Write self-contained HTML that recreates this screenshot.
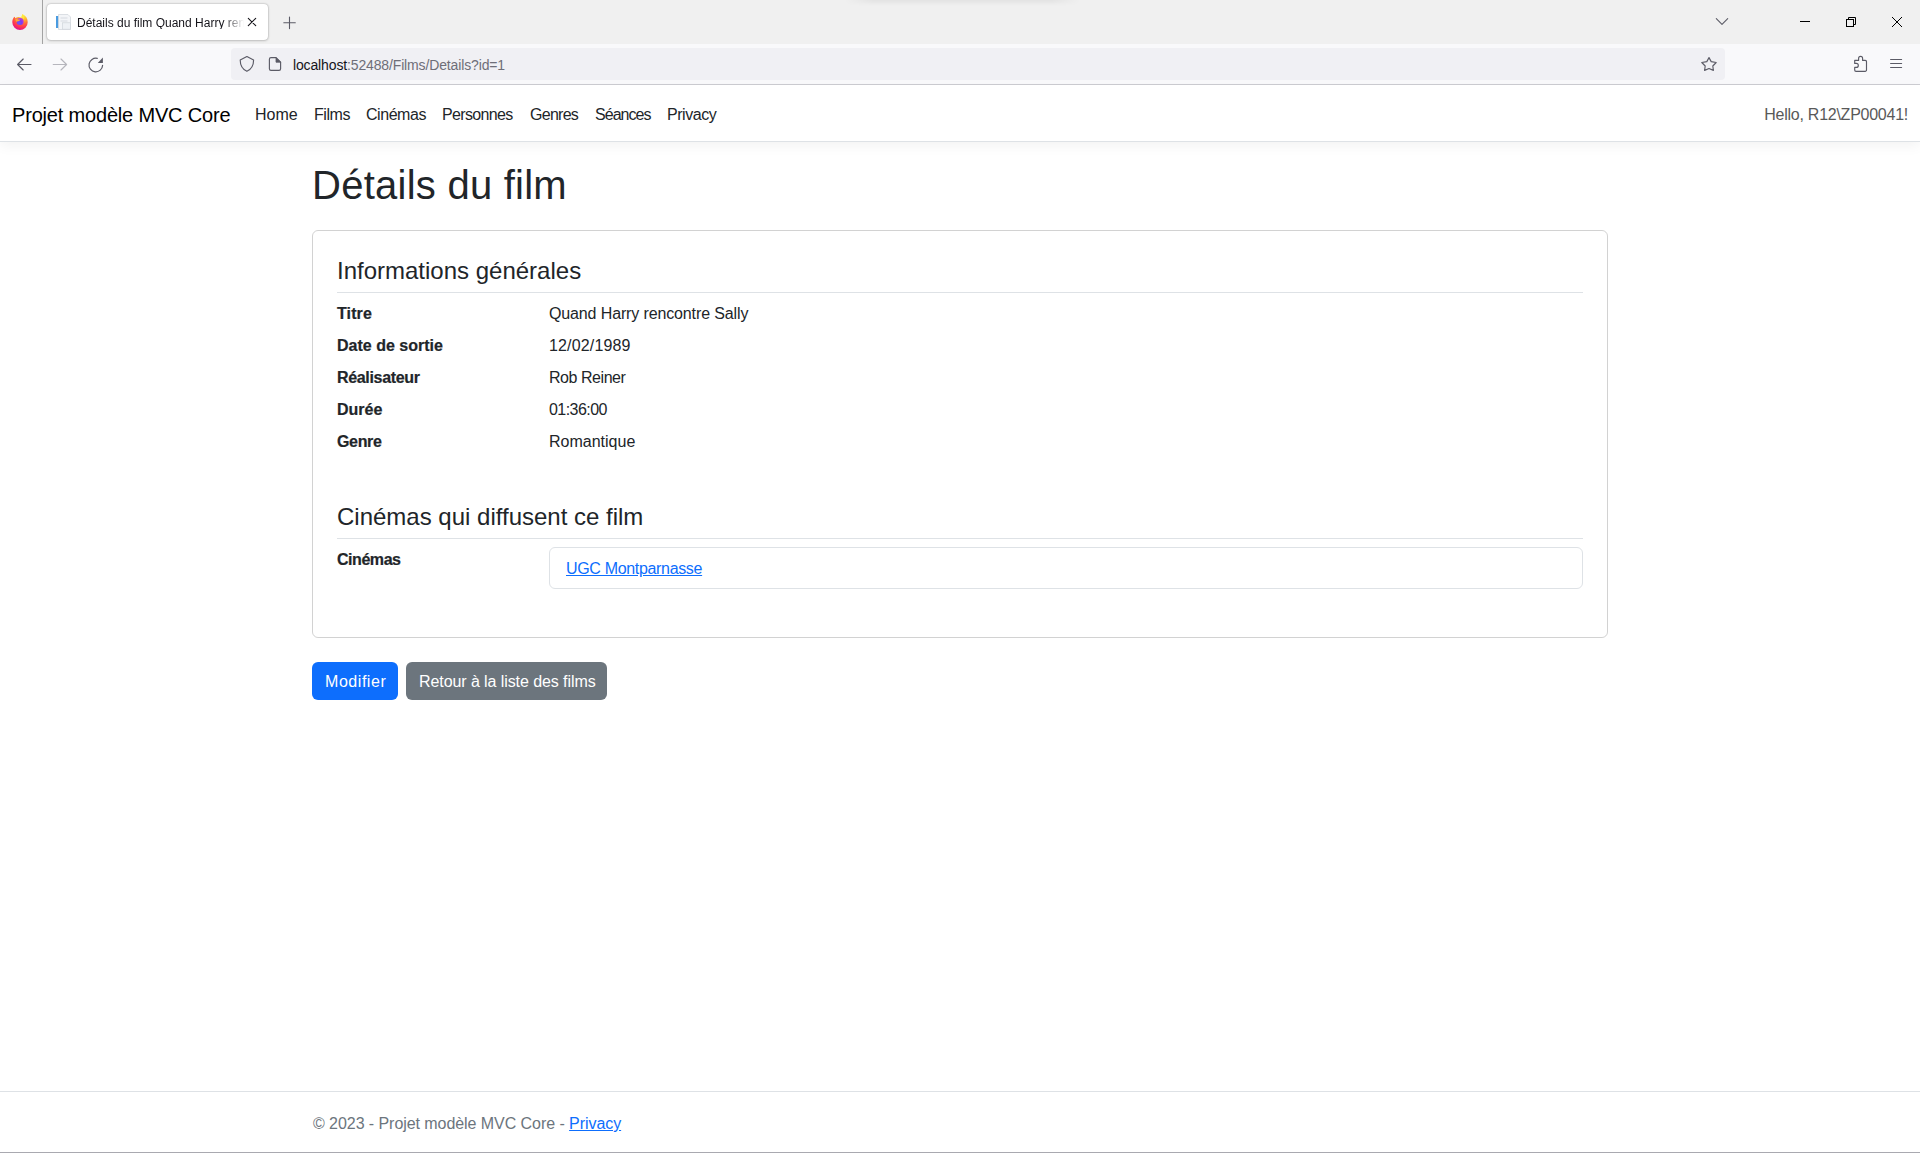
<!DOCTYPE html>
<html>
<head>
<meta charset="utf-8">
<style>
*{box-sizing:border-box;margin:0;padding:0}
html,body{width:1920px;height:1153px;overflow:hidden;background:#fff;font-family:"Liberation Sans",sans-serif;color:#212529}
.a{position:absolute;white-space:nowrap}
#tabbar{position:absolute;left:0;top:0;width:1920px;height:44px;background:#f0f0f0}
#toolbar{position:absolute;left:0;top:44px;width:1920px;height:40px;background:#f9f9fb}
#chromeline{position:absolute;left:0;top:84px;width:1920px;height:1px;background:#cdcdd2}
#tab{position:absolute;left:47px;top:4px;width:221px;height:36px;background:#fff;border-radius:4px;box-shadow:0 0 2px rgba(0,0,0,.35),0 1px 3px rgba(0,0,0,.12)}
#sep{position:absolute;left:42px;top:0;width:1px;height:44px;background:#a3a3a3}
#urlbar{position:absolute;left:231px;top:48px;width:1494px;height:32px;background:#f0f0f4;border-radius:4px}
.t12{font-size:12px;line-height:12px}
.t14{font-size:14px;line-height:14px}
.t16{font-size:16px;line-height:16px}
.t20{font-size:20px;line-height:20px}
.t24{font-size:24px;line-height:24px}
.t40{font-size:40px;line-height:40px}
#navbar{position:absolute;left:0;top:85px;width:1920px;height:57px;background:#fff;border-bottom:1px solid #dee2e6;box-shadow:0 .25rem .75rem rgba(0,0,0,.05)}
#card{position:absolute;left:312px;top:230px;width:1296px;height:408px;border:1px solid rgba(0,0,0,.175);border-radius:6px}
.hr{position:absolute;left:337px;width:1246px;height:1px;background:#dee2e6}
.b{font-weight:bold;-webkit-text-stroke:0.2px #212529}
#lg{position:absolute;left:549px;top:547px;width:1034px;height:42px;border:1px solid #dee2e6;border-radius:6px}
.btn{position:absolute;top:662px;height:38px;border-radius:6px}
#footer{position:absolute;left:0;top:1091px;width:1920px;height:1px;background:#dee2e6}
#winb{position:absolute;left:0;top:1152px;width:1920px;height:1px;background:#a9a9b0}
a{color:#0d6efd;text-decoration:underline}
</style>
</head>
<body>
<!-- Browser chrome -->
<div id="tabbar"></div>
<div class="a" style="left:845px;top:0;width:235px;height:6px;background:linear-gradient(to bottom,rgba(0,0,0,.05),rgba(0,0,0,0));-webkit-mask-image:linear-gradient(to right,transparent,#000 12%,#000 88%,transparent)"></div>
<div id="toolbar"></div>
<div id="chromeline"></div>
<div id="sep"></div>
<div id="tab"></div>
<div id="urlbar"></div>
<svg class="a" style="left:0;top:0" width="1920" height="85" viewBox="0 0 1920 85">
<defs>
<radialGradient id="ff1" cx="23" cy="15" r="15" gradientUnits="userSpaceOnUse"><stop offset="0" stop-color="#fff44f"/><stop offset="0.3" stop-color="#ffbd2e"/><stop offset="0.55" stop-color="#ff7139"/><stop offset="0.8" stop-color="#ff3750"/><stop offset="1" stop-color="#e31587"/></radialGradient>
<radialGradient id="ff2" cx="19" cy="23" r="4.5" gradientUnits="userSpaceOnUse"><stop offset="0" stop-color="#6a5cff"/><stop offset="0.6" stop-color="#7a3cf0"/><stop offset="1" stop-color="#b833e1"/></radialGradient>
</defs>
<!-- firefox logo -->
<path d="M14.3 16.8 C13 18.3 12.3 20.2 12.3 22.2 A7.7 7.7 0 0 0 27.7 22.2 C27.7 18.6 25.8 15.6 22.4 14 C22.9 15.4 22.6 16.6 21.6 17.6 L18.4 16.9 C17.2 17.2 16 17.6 15.3 18.2 C15.2 17.6 14.8 17.1 14.3 16.8 Z" fill="url(#ff1)"/>
<path d="M22.4 14 C23.8 15.3 24.4 17.5 23.8 19.5 C23.2 17.8 22.2 17 21 17.4 Z" fill="#ffe93a"/>
<circle cx="20.1" cy="21.6" r="3.5" fill="url(#ff2)"/>
<path d="M15.3 18.2 C16.3 19.2 18.5 19.4 20.3 19.6 C20.2 20.6 19.4 21 18.3 21.2 L16.2 21.8 C15.6 20.6 15.3 19.4 15.3 18.2 Z" fill="#ffa436"/>
<!-- tab page icon -->
<rect x="56" y="16" width="3" height="12" fill="#4a9be0"/>
<path d="M58.5 14.5 H68 L70.5 17 V29.5 H58.5 Z" fill="#f3f5f8" stroke="#d3d8de" stroke-width="0.8"/>
<rect x="60.5" y="17.5" width="7" height="1" fill="#d5dae0"/>
<rect x="60.5" y="20.5" width="7" height="1" fill="#d5dae0"/>
<rect x="62.5" y="22.8" width="8" height="6.4" fill="#eef1f5" stroke="#cfd4da" stroke-width="0.7"/>
<!-- tab close -->
<path d="M248.3 18.3 L255.7 25.7 M255.7 18.3 L248.3 25.7" stroke="#15141a" stroke-width="1.1" stroke-linecap="round"/>
<!-- new tab -->
<path d="M289.5 17 V28.6 M283.8 22.7 H295.3" stroke="#5b5b66" stroke-width="1.1" stroke-linecap="round"/>
<!-- window controls -->
<path d="M1716.3 18.6 L1722 24.3 L1727.7 18.6" fill="none" stroke="#5b5b66" stroke-width="1.1" stroke-linecap="round" stroke-linejoin="round"/>
<rect x="1800" y="21" width="10" height="1" fill="#000"/>
<rect x="1846.5" y="19.5" width="7" height="7" fill="none" stroke="#000" stroke-width="1"/>
<path d="M1848.5 19.5 V17.5 H1855.5 V24.5 H1853.5" fill="none" stroke="#000" stroke-width="1"/>
<path d="M1892 17 L1902 27 M1902 17 L1892 27" stroke="#000" stroke-width="1"/>
<!-- back / forward / reload -->
<path d="M31 64.5 H17.6 M23.2 59 L17.6 64.5 L23.2 70" fill="none" stroke="#5b5b66" stroke-width="1.15" stroke-linecap="round" stroke-linejoin="round"/>
<path d="M53.2 64.5 H66.6 M61 59 L66.6 64.5 L61 70" fill="none" stroke="#b6b6bd" stroke-width="1.15" stroke-linecap="round" stroke-linejoin="round"/>
<path d="M102.6 65.3 A6.8 6.8 0 1 1 97.3 58.4" fill="none" stroke="#5b5b66" stroke-width="1.2" stroke-linecap="round"/>
<path d="M102.9 57.6 V62.9 H97.8 Z" fill="#5b5b66"/>
<!-- shield -->
<path d="M246.9 56.6 L253.6 60 C253.6 65.6 251.5 69.2 246.9 71.3 C242.3 69.2 240.2 65.6 240.2 60 Z" fill="none" stroke="#5b5b66" stroke-width="1.15" stroke-linejoin="round"/>
<!-- page icon -->
<path d="M276 57.6 H271 A1.6 1.6 0 0 0 269.4 59.2 V68.8 A1.6 1.6 0 0 0 271 70.4 H279 A1.6 1.6 0 0 0 280.6 68.8 V62.2 Z" fill="none" stroke="#5b5b66" stroke-width="1.15" stroke-linejoin="round"/>
<path d="M276 57.6 L280.6 62.2 H276 Z" fill="#5b5b66" stroke="#5b5b66" stroke-width="0.8" stroke-linejoin="round"/>
<!-- star -->
<path d="M1709 57.6 L1711.2 61.6 L1716.2 62.5 L1712.8 66 L1713.4 70.4 L1709 68.5 L1704.6 70.4 L1705.2 66 L1701.8 62.5 L1706.8 61.6 Z" fill="none" stroke="#5b5b66" stroke-width="1.15" stroke-linejoin="round"/>
<!-- puzzle -->
<path d="M1854.7 60.4 H1858.6 V58.4 A2 2 0 0 1 1862.6 58.4 V60.4 H1865.2 A1.3 1.3 0 0 1 1866.5 61.7 V70 A1.3 1.3 0 0 1 1865.2 71.3 H1856 A1.3 1.3 0 0 1 1854.7 70 V67.4 H1856.3 A2 2 0 0 0 1856.3 63.4 H1854.7 Z" fill="none" stroke="#5b5b66" stroke-width="1.15" stroke-linejoin="round"/>
<!-- hamburger -->
<path d="M1890.6 59.5 H1901.6 M1890.6 63.5 H1901.6 M1890.6 67.5 H1901.6" stroke="#5b5b66" stroke-width="1.15" stroke-linecap="round"/>
</svg>
<div class="a t12" style="left:77px;top:17px;color:#15141a;width:168px;overflow:hidden;letter-spacing:0px;-webkit-mask-image:linear-gradient(to right,#000 146px,transparent 167px)">Détails du film Quand Harry rencontre Sally</div>
<div class="a t14" style="left:293px;top:58px;color:#15141a;letter-spacing:-0.14px">localhost<span style="color:#6e6e78">:52488/Films/Details?id=1</span></div>

<!-- Page -->
<div id="navbar"></div>
<div class="a t20" style="left:12px;top:105px;color:#000;letter-spacing:-0.18px">Projet modèle MVC Core</div>
<div class="a t16" style="left:255px;top:107px">Home</div>
<div class="a t16" style="left:314px;top:107px;letter-spacing:-0.45px">Films</div>
<div class="a t16" style="left:366px;top:107px;letter-spacing:-0.45px">Cinémas</div>
<div class="a t16" style="left:442px;top:107px;letter-spacing:-0.66px">Personnes</div>
<div class="a t16" style="left:530px;top:107px;letter-spacing:-0.72px">Genres</div>
<div class="a t16" style="left:595px;top:107px;letter-spacing:-0.95px">Séances</div>
<div class="a t16" style="left:667px;top:107px;letter-spacing:-0.45px">Privacy</div>
<div class="a t16" style="right:12px;top:107px;color:#595959;letter-spacing:-0.25px">Hello, R12\ZP00041!</div>

<div class="a t40" style="left:312px;top:165px;letter-spacing:0.25px">Détails du film</div>
<div id="card"></div>
<div class="a t24" style="left:337px;top:259px">Informations générales</div>
<div class="hr" style="top:292px"></div>
<div class="a t16 b" style="left:337px;top:306px;letter-spacing:0.1px">Titre</div>
<div class="a t16" style="left:549px;top:306px;letter-spacing:-0.13px">Quand Harry rencontre Sally</div>
<div class="a t16 b" style="left:337px;top:338px">Date de sortie</div>
<div class="a t16" style="left:549px;top:338px;letter-spacing:0.15px">12/02/1989</div>
<div class="a t16 b" style="left:337px;top:370px;letter-spacing:-0.33px">Réalisateur</div>
<div class="a t16" style="left:549px;top:370px;letter-spacing:-0.45px">Rob Reiner</div>
<div class="a t16 b" style="left:337px;top:402px">Durée</div>
<div class="a t16" style="left:549px;top:402px;letter-spacing:-0.55px">01:36:00</div>
<div class="a t16 b" style="left:337px;top:434px;letter-spacing:-0.35px">Genre</div>
<div class="a t16" style="left:549px;top:434px">Romantique</div>
<div class="a t24" style="left:337px;top:505px">Cinémas qui diffusent ce film</div>
<div class="hr" style="top:538px"></div>
<div class="a t16 b" style="left:337px;top:552px;letter-spacing:-0.45px">Cinémas</div>
<div id="lg"></div>
<div class="a t16" style="left:566px;top:561px;letter-spacing:-0.33px"><a>UGC Montparnasse</a></div>

<div class="btn" style="left:312px;width:86px;background:#0d6efd"></div>
<div class="a t16" style="left:325px;top:674px;color:#fff;letter-spacing:0.55px">Modifier</div>
<div class="btn" style="left:406px;width:201px;background:#6c757d"></div>
<div class="a t16" style="left:419px;top:674px;color:#fff;letter-spacing:-0.08px">Retour à la liste des films</div>

<div id="footer"></div>
<div class="a t16" style="left:313px;top:1116px;color:#6c757d;letter-spacing:-0.06px">© 2023 - Projet modèle MVC Core - <a>Privacy</a></div>
<div id="winb"></div>
</body>
</html>
